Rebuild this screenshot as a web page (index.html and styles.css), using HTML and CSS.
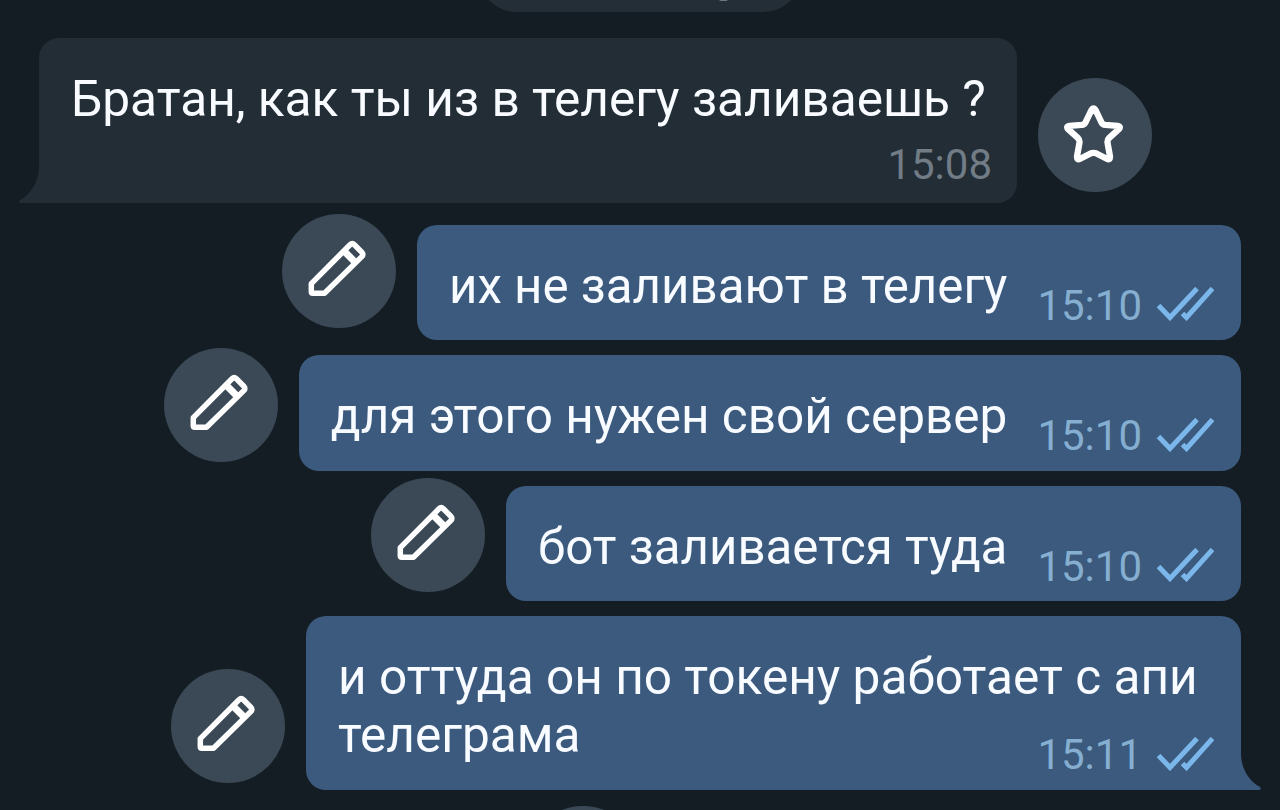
FILE: index.html
```
<!DOCTYPE html>
<html lang="ru">
  <head>
    <meta charset="UTF-8" />
    <meta name="viewport" content="width=device-width, initial-scale=1.0" />
    <title>Chat</title>
    <link rel="stylesheet" href="styles.css">
  </head>
  <body>
    <svg class="defs">
      <symbol id="pencil" viewBox="0 0 60 60">
        <path d="M4.3 44.6 43 5.8Q45.2 3.7 47.4 5.8L54.8 13.2Q57 15.4 54.8 17.6L17.500 54.3H5.8Q4.3 54.3 4.3 52.8Z" />
        <path d="M37 12 48.500 23.500" stroke-width="7" />
      </symbol>
      <symbol id="checks" viewBox="0 0 58 34">
        <path d="M2.500 18.500 14 30.500 41 1.500M26.500 26.500 30.500 30.500 56.500 1.500" />
      </symbol>
      <symbol id="tail" viewBox="0 0 24 50">
        <path d="M0 0H3V13C3 29 11 41 22 47Q24 49 21.500 50H0Z" />
      </symbol>
    </svg>

    <div class="date-pill"><span class="date-mark"></span></div>

    <div class="chat">
      <div class="message incoming">
        <div class="bubble">
          <div class="text">Братан, как ты из в телегу заливаешь ?</div>
          <div class="meta">15:08</div>
          <svg class="tail"><use href="#tail" /></svg>
        </div>
        <button class="action">
          <svg class="star" viewBox="0 0 60 60">
            <path d="M27.900 5.200Q30 1.500 32.100 5.200L38 17.500Q39.300 20 42 20.300L54.500 21.300Q58.500 22 55.500 24.800L46 33.500Q43.800 35.500 44.300 38.500L46.800 52.500Q47 56.500 43.500 54.700L33 49.300Q30 48 27 49.300L16.500 54.700Q13 56.500 13.200 52.500L15.700 38.500Q16.200 35.500 14 33.500L4.500 24.800Q1.500 22 5.500 21.300L18 20.300Q20.700 20 22 17.500Z" />
          </svg>
        </button>
      </div>

      <div class="message outgoing first">
        <button class="action"><svg><use href="#pencil" /></svg></button>
        <div class="bubble">
          <div class="text">их не заливают в телегу</div>
          <div class="meta">15:10 <svg class="checks"><use href="#checks" /></svg></div>
        </div>
      </div>

      <div class="message outgoing second">
        <button class="action"><svg><use href="#pencil" /></svg></button>
        <div class="bubble">
          <div class="text">для этого нужен свой сервер</div>
          <div class="meta">15:10 <svg class="checks"><use href="#checks" /></svg></div>
        </div>
      </div>

      <div class="message outgoing">
        <button class="action"><svg><use href="#pencil" /></svg></button>
        <div class="bubble">
          <div class="text">бот заливается туда</div>
          <div class="meta">15:10 <svg class="checks"><use href="#checks" /></svg></div>
        </div>
      </div>

      <div class="message outgoing last">
        <button class="action"><svg><use href="#pencil" /></svg></button>
        <div class="bubble">
          <div class="text">и оттуда он по токену работает с апи<br>телеграма</div>
          <div class="meta">15:11 <svg class="checks"><use href="#checks" /></svg></div>
          <svg class="tail"><use href="#tail" /></svg>
        </div>
      </div>
    </div>

    <div class="next-action"></div>
  </body>
</html>
```

FILE: styles.css
```
* {
  box-sizing: border-box;
}

body {
  margin: 0;
  height: 810px;
  overflow: hidden;
  background-color: #151d24;
  color: #f8fbff;
  font-family: Roboto, sans-serif;
}

.defs {
  display: none;
}

.date-pill {
  width: 322px;
  height: 75px;
  margin: -63px auto 0;
  padding: 62px 0 0 240px;
  border-radius: 38px;
  background-color: #242e37;
}

.date-mark {
  display: block;
  width: 9px;
  height: 2px;
  border-radius: 0 0 4px 4px;
  background-color: #707980;
}

.chat {
  display: flex;
  flex-direction: column;
  gap: 15px;
  padding: 25.500px 39px 0;
}

.message {
  display: flex;
  align-items: flex-end;
  gap: 21px;
}

.outgoing {
  justify-content: flex-end;
}

.first {
  margin-top: 6.500px;
}

.bubble {
  position: relative;
  display: flex;
  height: 115.500px;
  padding: 32px 27px 0 32px;
  border-radius: 20px;
  background-color: #3b5a7d;
}

.text {
  font-size: 49.250px;
  line-height: 58px;
  white-space: nowrap;
}

.second .text {
  font-size: 49.500px;
}

.meta {
  display: flex;
  align-items: center;
  height: 50px;
  margin: 24px 0 0 30px;
  color: #85aed0;
  font-size: 42px;
  line-height: 50px;
}

.checks {
  width: 58px;
  height: 34px;
  margin: 0 0 3px 14px;
  fill: none;
  stroke: #7cb7eb;
  stroke-width: 5px;
}

.incoming .bubble {
  flex-direction: column;
  width: 978px;
  height: 165.500px;
  padding: 32px 25px 0 32px;
  border-bottom-left-radius: 0;
  background-color: #232d36;
}

.incoming .text,
.last .text {
  font-size: 49.600px;
}

.incoming .meta {
  align-self: flex-end;
  margin: 12px 0 0;
  color: #717c86;
}

.last .bubble {
  flex-direction: column;
  width: 935px;
  height: 174px;
  border-bottom-right-radius: 0;
}

.last .meta {
  align-self: flex-end;
  margin: -34px 0 0;
}

/* bubble corners */
.tail {
  position: absolute;
  right: -21px;
  bottom: 0;
  width: 24px;
  height: 50px;
  fill: #3b5a7d;
}

.incoming .tail {
  right: auto;
  left: -21px;
  fill: #232d36;
  transform: scaleX(-1);
}

.action {
  display: flex;
  flex: none;
  align-items: center;
  justify-content: center;
  width: 114px;
  height: 114px;
  margin: -20px 0 9px;
  padding: 0 4px 4px 0;
  border: none;
  border-radius: 50%;
  background-color: #3a4955;
}

.action svg {
  width: 60px;
  height: 60px;
  fill: none;
  stroke: #fff;
  stroke-width: 5.500px;
  stroke-linejoin: round;
}

.action .star {
  width: 59px;
  height: 59px;
  stroke-width: 6.400px;
}

.incoming .action {
  margin-bottom: 11px;
  padding-bottom: 2px;
}

.first .action {
  margin-bottom: 12px;
}

.last .action {
  margin-bottom: 7px;
}

/* only the top edge of the next button is visible */
.next-action {
  height: 4px;
  margin-top: 16px;
  background: radial-gradient(circle at 583px 57px, #3a4955 56.500px, transparent 57.500px);
}
```
